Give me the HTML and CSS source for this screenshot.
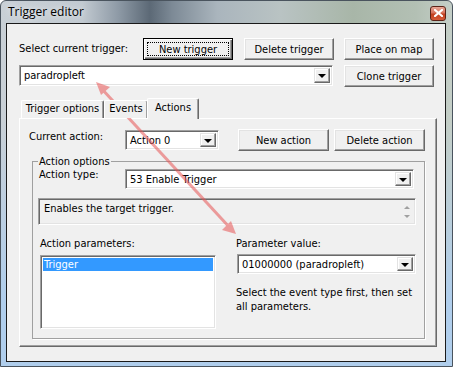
FILE: index.html
```html
<!DOCTYPE html>
<html>
<head>
    <title>Trigger editor</title>
    <meta charset="UTF-8">
    <link rel="stylesheet" href="styles.css">
</head>
<body>
    <div class="window">
        <div class="titlebar">
            <span class="title">Trigger editor</span>
            <div class="close-btn">
                <svg width="9" height="8" viewBox="0 0 9 8">
                    <path d="M1 1 L8 7 M8 1 L1 7" stroke="#fff" stroke-width="2.2" stroke-linecap="square"/>
                </svg>
            </div>
        </div>

        <div class="client">
            <div class="row row-top">
                <span class="lbl lbl-select">Select current trigger:</span>
                <button class="btn default">New trigger</button>
                <button class="btn btn-gap">Delete trigger</button>
                <button class="btn btn-gap2">Place on map</button>
            </div>

            <div class="row row-combo">
                <div class="combo combo-trigger">
                    <span class="combo-text">paradropleft</span>
                    <span class="drop"><i class="tri"></i></span>
                </div>
                <button class="btn btn-gap">Clone trigger</button>
            </div>

            <div class="tabs">
                <div class="tab tab-first">Trigger options</div>
                <div class="tab tab-events">Events</div>
                <div class="tab active">Actions</div>
            </div>

            <div class="tabpage">
                <div class="row row-action">
                    <span class="lbl lbl-current">Current action:</span>
                    <div class="combo combo-action">
                        <span class="combo-text">Action 0</span>
                        <span class="drop"><i class="tri"></i></span>
                    </div>
                    <button class="btn btn-new-action">New action</button>
                    <button class="btn btn-del-action">Delete action</button>
                </div>

                <fieldset class="group">
                    <legend>Action options</legend>

                    <div class="row row-type">
                        <span class="lbl lbl-type">Action type:</span>
                        <div class="combo combo-type">
                            <span class="combo-text">53 Enable Trigger</span>
                            <span class="drop"><i class="tri"></i></span>
                        </div>
                    </div>

                    <div class="desc">
                        <span class="desc-text">Enables the target trigger.</span>
                        <span class="desc-scroll">
                            <i class="arr-up"></i>
                            <i class="arr-down"></i>
                        </span>
                    </div>

                    <div class="row row-params">
                        <div class="col-left">
                            <div class="lbl">Action parameters:</div>
                            <div class="listbox">
                                <div class="item selected">Trigger</div>
                            </div>
                        </div>
                        <div class="col-right">
                            <div class="lbl">Parameter value:</div>
                            <div class="combo combo-param">
                                <span class="combo-text">01000000 (paradropleft)</span>
                                <span class="drop"><i class="tri"></i></span>
                            </div>
                            <div class="hint">Select the event type first, then set all parameters.</div>
                        </div>
                    </div>
                </fieldset>
            </div>

            <!-- annotation arrow drawn over the dialog -->
            <svg class="arrow" width="439" height="338" viewBox="0 0 439 338">
                <g opacity="0.55" stroke="#e85555" fill="#e85555">
                    <line x1="94" y1="64" x2="224" y2="205" stroke-width="3"/>
                    <polygon points="89,58 103,63 94,71" stroke="none"/>
                    <polygon points="229,210 215,206 224,197" stroke="none"/>
                </g>
            </svg>
        </div>
    </div>
</body>
</html>
```

FILE: styles.css
```css
* {
    box-sizing: border-box;
}

body {
    margin: 0;
    width: 453px;
    height: 367px;
    overflow: hidden;
    font-family: 'DejaVu Sans Condensed', 'DejaVu Sans', sans-serif;
    font-size: 11px;
    color: #000;
    background: #fff;
}

.window {
    width: 453px;
    height: 367px;
    display: flex;
    flex-direction: column;
    border: 1px solid #4a545e;
    border-radius: 6px 6px 0 0;
    background:
        linear-gradient(180deg, rgba(170,200,232,0) 0px, rgba(170,200,232,0) 120px, rgba(176,206,236,1) 300px),
        linear-gradient(90deg, #c9d0d6 0%, #c2cad1 18%, #8e9aa6 26%, #5c6976 33%, #7d8a96 38%, #aab5bd 48%, #b9c3c3 62%, #a8b6a8 78%, #b3c0b4 92%, #c5cfc8 100%);
}

.titlebar {
    height: 22px;
    display: flex;
    align-items: center;
    padding: 0 6px 0 7px;
}

.title {
    font-family: 'Open Sans', 'Noto Sans', sans-serif;
    font-size: 12px;
    color: #000;
    text-shadow: 0 0 6px rgba(255,255,255,0.9);
    margin-top: -2px;
}

.close-btn {
    margin-left: auto;
    margin-top: 2px;
    width: 16px;
    height: 15px;
    border: 1px solid #5c2318;
    border-radius: 3px;
    background: linear-gradient(180deg, #e8a898 0%, #d8735c 45%, #c2401f 55%, #d65c3a 100%);
    display: flex;
    align-items: center;
    justify-content: center;
}

.client {
    position: relative;
    flex: 1;
    margin: 0 6px 4px 5px;
    border: 1px solid #1a1a1a;
    background: #f0f0f0;
}

.row {
    display: flex;
}

.lbl {
    line-height: 13px;
    white-space: nowrap;
}

/* classic raised button */
.btn {
    font: inherit;
    color: #000;
    width: 90px;
    height: 22px;
    padding: 0;
    background: #f0f0f0;
    border: 1px solid;
    border-color: #fff #696969 #696969 #fff;
    box-shadow: inset -1px -1px #a0a0a0, inset 1px 1px #e3e3e3;
}

.btn.default {
    border-color: #000;
    box-shadow: inset 1px 1px #fff, inset -1px -1px #696969, inset -2px -2px #a0a0a0;
    outline: 1px dotted #000;
    outline-offset: -5px;
}

/* classic sunken combo box */
.combo {
    display: flex;
    align-items: center;
    height: 20px;
    padding: 2px;
    background: #fff;
    border: 1px solid;
    border-color: #a0a0a0 #fff #fff #a0a0a0;
    box-shadow: inset 1px 1px #696969, inset -1px -1px #e3e3e3;
}

.combo-text {
    flex: 1;
    padding-left: 2px;
    white-space: nowrap;
    overflow: hidden;
}

.drop {
    width: 16px;
    height: 100%;
    display: flex;
    align-items: center;
    justify-content: center;
    background: #f0f0f0;
    border: 1px solid;
    border-color: #e3e3e3 #696969 #696969 #e3e3e3;
    box-shadow: inset -1px -1px #a0a0a0, inset 1px 1px #fff;
}

.tri {
    width: 0;
    height: 0;
    border-left: 4px solid transparent;
    border-right: 4px solid transparent;
    border-top: 4px solid #000;
    margin-top: 1px;
}

/* top rows */
.row-top {
    margin-top: 14px;
    padding-left: 12px;
    align-items: center;
}

.lbl-select {
    width: 124px;
    margin-top: -2px;
}

.btn-gap {
    margin-left: 11px;
}

.btn-gap2 {
    margin-left: 10px;
}

.row-combo {
    margin-top: 5px;
    padding-left: 12px;
    align-items: flex-start;
}

.combo-trigger {
    width: 314px;
    height: 21px;
}

/* tabs */
.tabs {
    display: flex;
    align-items: flex-end;
    height: 20px;
    margin: 11px 0 0 12px;
    position: relative;
    z-index: 1;
}

.tab {
    height: 18px;
    padding: 0;
    line-height: 16px;
    text-align: center;
    white-space: nowrap;
    background: #f0f0f0;
    border: 1px solid;
    border-bottom: none;
    border-color: #fff #696969 #696969 #fff;
    box-shadow: inset -1px 0 #a0a0a0;
    border-radius: 2px 2px 0 0;
}

.tab-first {
    margin-left: 2px;
    width: 83px;
}

.tab-events {
    width: 44px;
}

.tab.active {
    height: 21px;
    margin-bottom: -1px;
    margin-left: -1px;
    width: 52px;
    line-height: 17px;
}

.tabpage {
    margin-left: 12px;
    width: 418px;
    height: 229px;
    border: 1px solid;
    border-color: #fff #696969 #696969 #fff;
    box-shadow: inset -1px -1px #a0a0a0;
}

.row-action {
    margin-top: 10px;
    padding-left: 9px;
    align-items: flex-start;
}

.lbl-current {
    width: 96px;
    margin-top: 1px;
}

.combo-action {
    width: 94px;
    margin-top: 1px;
}

.btn-new-action {
    width: 91px;
    margin-left: 19px;
}

.btn-del-action {
    width: 91px;
    margin-left: 5px;
}

/* group box */
.group {
    margin: 4px 0 0 12px;
    padding: 0;
    width: 393px;
    height: 184px;
    border: 1px solid #a0a0a0;
    box-shadow: 1px 1px 0 #fff;
    min-width: 0;
}

.group legend {
    margin-left: 5px;
    padding: 0 1px;
    line-height: 13px;
}

.row-type {
    padding-left: 6px;
    align-items: flex-start;
}

.lbl-type {
    width: 86px;
}

.combo-type {
    width: 289px;
    margin-top: 1px;
}

.desc {
    display: flex;
    margin: 9px 0 0 5px;
    width: 378px;
    height: 27px;
    border: 1px solid;
    border-color: #a0a0a0 #fff #fff #a0a0a0;
    box-shadow: inset 1px 1px #696969, inset -1px -1px #e3e3e3;
}

.desc-text {
    flex: 1;
    padding: 3px 0 0 5px;
}

.desc-scroll {
    width: 17px;
    display: flex;
    flex-direction: column;
    align-items: center;
    padding-top: 7px;
    gap: 6px;
}

.arr-up, .arr-down {
    width: 0;
    height: 0;
    border-left: 3px solid transparent;
    border-right: 3px solid transparent;
}

.arr-up {
    border-bottom: 3px solid #a0a0a0;
}

.arr-down {
    border-top: 3px solid #a0a0a0;
}

.row-params {
    margin-top: 12px;
}

.col-left {
    margin-left: 7px;
    width: 176px;
}

.listbox {
    margin-top: 5px;
    height: 74px;
    padding: 2px;
    background: #fff;
    border: 1px solid;
    border-color: #a0a0a0 #fff #fff #a0a0a0;
    box-shadow: inset 1px 1px #696969, inset -1px -1px #e3e3e3;
}

.item {
    height: 13px;
    line-height: 13px;
    padding-left: 1px;
}

.item.selected {
    background: #3399ff;
    color: #fff;
}

.col-right {
    margin-left: 20px;
    width: 181px;
}

.combo-param {
    margin: 4px 0 0 1px;
    width: 179px;
}

.hint {
    margin-top: 12px;
    line-height: 14px;
}

.arrow {
    position: absolute;
    left: 0;
    top: 0;
    pointer-events: none;
}
```
